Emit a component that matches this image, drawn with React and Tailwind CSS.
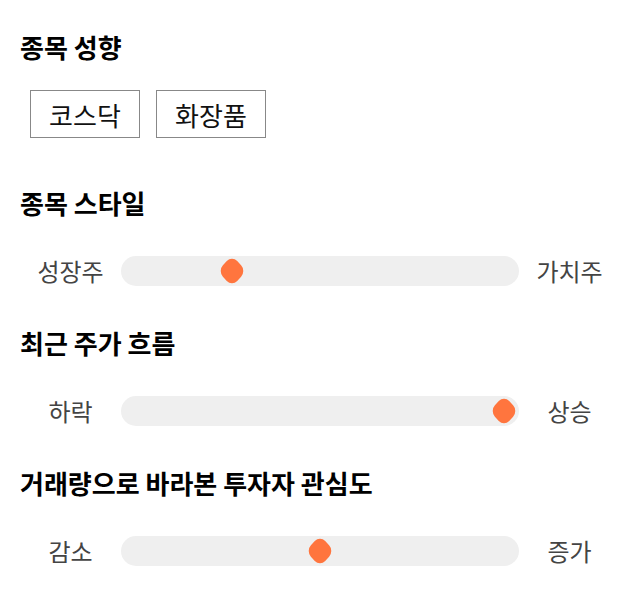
import React from "react";

const sliders = [
  { title: "종목 스타일", left: "성장주", right: "가치주", value: 0.26 },
  { title: "최근 주가 흐름", left: "하락", right: "상승", value: 1 },
  { title: "거래량으로 바라본 투자자 관심도", left: "감소", right: "증가", value: 0.5 },
];

function Slider({ left, right, value }) {
  return (
    <div className="flex items-center h-[30px]">
      <div className="w-[101px] text-center text-[24px] text-[#444]">{left}</div>
      <div className="relative flex-1 h-[30px] rounded-full bg-[#efefef]">
        <div
          className="absolute top-0 w-[30px] h-[30px] flex items-center justify-center scale-x-[0.92]"
          style={{ left: `calc(${value} * (100% - 30px))` }}
        >
          <div className="w-[22px] h-[22px] rotate-45 rounded-[8px] bg-[#ff753e]" />
        </div>
      </div>
      <div className="w-[101px] text-center text-[24px] text-[#444]">{right}</div>
    </div>
  );
}

export default function App() {
  return (
    <div className="w-[640px] h-[606px] bg-white px-5 pt-[30px] font-['Noto_Sans_CJK_KR','Noto_Sans',sans-serif]">
      <h2 className="text-[26px] font-bold text-black leading-[34px]">종목 성향</h2>
      <div className="flex gap-4 mt-[26px] pl-[10px]">
        <div className="h-[48px] w-[110px] border border-[#888] flex items-center justify-center text-[26px] text-[#111]">코스닥</div>
        <div className="h-[48px] w-[110px] border border-[#888] flex items-center justify-center text-[26px] text-[#111]">화장품</div>
      </div>
      {sliders.map((s, i) => (
        <div key={s.title} className={i === 0 ? "mt-[48px]" : "mt-[40px]"}>
          <h2 className="text-[26px] font-bold text-black leading-[34px]">{s.title}</h2>
          <div className="mt-[36px]">
            <Slider left={s.left} right={s.right} value={s.value} />
          </div>
        </div>
      ))}
    </div>
  );
}
